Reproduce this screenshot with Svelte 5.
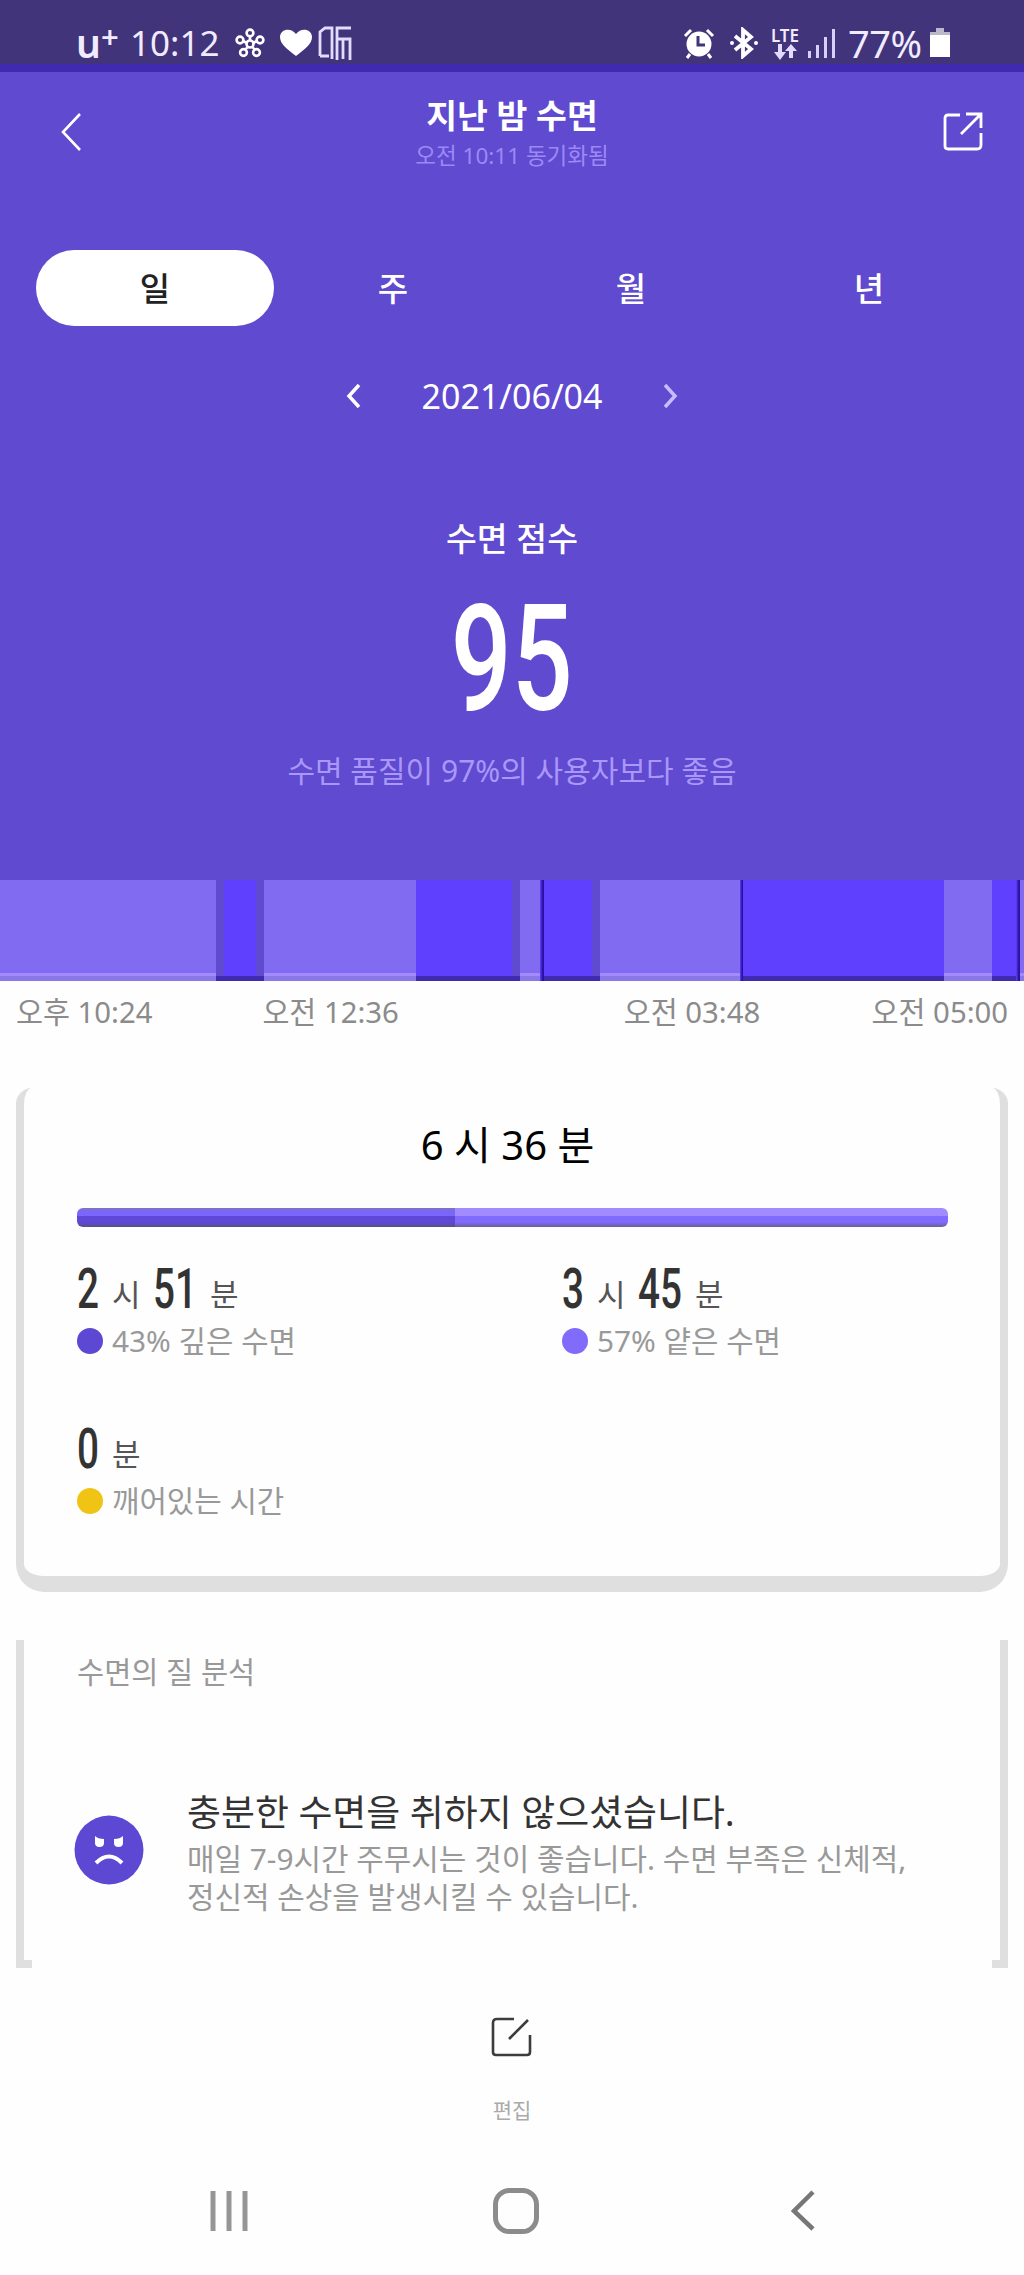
<script lang="ts">
	const tabs = ['일', '주', '월', '년'];
	let active = $state('일');

	// sleep stages across the recorded night, widths in px
	const stages = [
		{ kind: 'light', w: 216 },
		{ kind: 'gap', w: 8 },
		{ kind: 'deep', w: 32 },
		{ kind: 'gap', w: 8 },
		{ kind: 'light', w: 152 },
		{ kind: 'deep', w: 96 },
		{ kind: 'gap', w: 8 },
		{ kind: 'light', w: 20 },
		{ kind: 'line', w: 4 },
		{ kind: 'deep', w: 48 },
		{ kind: 'gap', w: 8 },
		{ kind: 'light', w: 140 },
		{ kind: 'line', w: 3 },
		{ kind: 'deep', w: 201 },
		{ kind: 'light', w: 48 },
		{ kind: 'deep', w: 24 },
		{ kind: 'line', w: 4 },
		{ kind: 'light', w: 4 }
	];

	const stats = [
		{ parts: [['2', '시'], ['51', '분']], color: '#5c48d2', label: '43% 깊은 수면' },
		{ parts: [['3', '시'], ['45', '분']], color: '#816bfa', label: '57% 얕은 수면' },
		{ parts: [['0', '분']], color: '#efc414', label: '깨어있는 시간' }
	];
</script>

<div class="screen">
	<div class="status">
		<div class="status-side">
			<span class="carrier">u<sup>+</sup></span>
			<span class="clock">10:12</span>
			<svg viewBox="0 0 32 32" width="32" height="32">
				<g fill="none" stroke="#fff" stroke-width="2.6">
					<circle cx="16" cy="17" r="3.5" />
					<circle cx="16" cy="6" r="3.4" />
					<circle cx="26" cy="13" r="3.4" />
					<circle cx="22.5" cy="25.5" r="3.4" />
					<circle cx="9.5" cy="25.5" r="3.4" />
					<circle cx="6" cy="13" r="3.4" />
					<path d="M16 9v5M23 14l-4 2M21 23l-3-3.5M11 23l3-3.5M9 14l4 2" />
				</g>
			</svg>
			<svg class="heart" viewBox="0 0 32 28" width="32" height="28">
				<path fill="#fff" d="M16 27C7 20 0 15 0 8 0 0 11-2 16 5 21-2 32 0 32 8c0 7-7 12-16 19z" />
			</svg>
			<svg class="bracket" viewBox="0 0 36 36" width="36" height="36">
				<path fill="none" stroke="#e4dcff" stroke-width="2.8" d="M2 31V7l5-4h7v31M2 31h9M19 35V3h14M19 14h13v21M25 14v20" />
			</svg>
		</div>
		<div class="status-side">
			<svg viewBox="0 0 32 32" width="32" height="32">
				<circle cx="16" cy="17" r="12.5" fill="#fff" />
				<path fill="none" stroke="#fff" stroke-width="3" d="M2 9l6-6M24 3l6 6M7 27l-3 4M25 27l3 4" />
				<path fill="none" stroke="#41347a" stroke-width="3" d="M15 9v9h7" />
			</svg>
			<svg class="bt" viewBox="0 0 30 32" width="30" height="32">
				<path fill="none" stroke="#fff" stroke-width="3.8" d="M6 9l16 13-8 7V3l8 7L6 23" />
				<circle cx="3" cy="16" r="2" fill="#fff" />
				<circle cx="27" cy="16" r="2" fill="#fff" />
			</svg>
			<div class="lte">
				<span>LTE</span>
				<svg viewBox="0 0 26 16" width="26" height="16">
					<path fill="#e4dcff" d="M6 0h4v8h4l-6 8-6-8h4zM17 14h4V7h4l-6-7-6 7h4z" />
				</svg>
			</div>
			<svg class="signal" viewBox="0 0 28 30" width="28" height="30">
				<path fill="#d9d0fa" d="M0 23h3v7H0zM8 17h3v13H8zM16 9h3v21h-3zM24 1h3v29h-3z" />
			</svg>
			<span class="percent">77%</span>
			<svg class="battery" viewBox="0 0 22 30" width="22" height="30">
				<path fill="#bdb7cc" d="M7 0h8v4h6v5H1V4h6z" />
				<path fill="#fff" d="M1 7h20v22H1z" />
			</svg>
		</div>
	</div>

	<section class="hero">
		<header>
			<svg viewBox="0 0 40 40" width="40" height="40">
				<path fill="none" stroke="#fff" stroke-width="2.6" d="M26 2L9 20l17 18" />
			</svg>
			<div class="heading">
				<h1>지난 밤 수면</h1>
				<p>오전 10:11 동기화됨</p>
			</div>
			<svg viewBox="0 0 40 40" width="40" height="40">
				<path fill="none" stroke="#fff" stroke-width="2.8" d="M17 3H5q-3 0-3 3v28q0 3 3 3h29q4 0 4-4V21M23 2h15v14M38 2L18 22" />
			</svg>
		</header>

		<div class="tabs">
			{#each tabs as tab}
				<button class:active={active === tab} onclick={() => (active = tab)}>{tab}</button>
			{/each}
		</div>

		<div class="date">
			<svg viewBox="0 0 16 26" width="16" height="26">
				<path fill="none" stroke="#fff" stroke-width="3.5" d="M13 2L3 13l10 11" />
			</svg>
			<span>2021/06/04</span>
			<svg viewBox="0 0 16 26" width="16" height="26">
				<path fill="none" stroke="#c8bcff" stroke-width="3.5" d="M3 2l10 11L3 24" />
			</svg>
		</div>

		<div class="score-label">수면 점수</div>
		<div class="score"><span>95</span></div>
		<div class="quality">수면 품질이 97%의 사용자보다 좋음</div>

		<div class="stages">
			{#each stages as s}
				<div class={s.kind} style="width: {s.w}px"></div>
			{/each}
		</div>
	</section>

	<div class="times">
		<span>오후 10:24</span>
		<span class="second">오전 12:36</span>
		<span class="third">오전 03:48</span>
		<span class="last">오전 05:00</span>
	</div>

	<section class="card summary">
		<h2>6 시 36 분</h2>
		<div class="bar">
			<div class="bar-deep"></div>
			<div class="bar-light"></div>
		</div>
		<div class="stats">
			{#each stats as stat}
				<div class="stat">
					<div class="value">
						{#each stat.parts as [num, unit]}
							<span class="num" class:wide={num.length > 1}><b>{num}</b></span>
							<span class="unit">{unit}</span>
						{/each}
					</div>
					<div class="legend">
						<i style="background: {stat.color}"></i>
						<span>{stat.label}</span>
					</div>
				</div>
			{/each}
		</div>
	</section>

	<section class="card analysis">
		<h3>수면의 질 분석</h3>
		<div class="advice">
			<svg viewBox="0 0 70 70" width="70" height="70">
				<circle cx="35" cy="35" r="34.5" fill="#5c48d2" />
				<path fill="none" stroke="#fff" stroke-width="4" d="M22 48q13-13 26 0" />
				<path fill="#fff" d="M21 21q3 3 9 3v4q0 4-4.500 4T21 28zM40 24q6 0 9-3v7q0 4-4.500 4T40 28z" />
			</svg>
			<div>
				<h4>충분한 수면을 취하지 않으셨습니다.</h4>
				<p>매일 7-9시간 주무시는 것이 좋습니다. 수면 부족은 신체적,<br />정신적 손상을 발생시킬 수 있습니다.</p>
			</div>
		</div>
	</section>

	<div class="edit">
		<svg viewBox="0 0 42 42" width="42" height="42">
			<path fill="none" stroke="#3c3c3c" stroke-width="2.6" d="M23 3H6q-4 0-4 4v29q0 3 3 3h31q3 0 3-3V19M18 23L37 4" />
		</svg>
		<span>편집</span>
	</div>

	<nav>
		<svg viewBox="0 0 44 42" width="44" height="42">
			<path fill="none" stroke="#959595" stroke-width="5" d="M5 1v40M21 1v40M37 1v40" />
		</svg>
		<svg class="home" viewBox="0 0 48 48" width="48" height="48">
			<rect x="3.5" y="3.5" width="41" height="41" rx="14" fill="none" stroke="#8c8c8c" stroke-width="5" />
		</svg>
		<svg viewBox="0 0 28 42" width="28" height="42">
			<path fill="none" stroke="#777" stroke-width="4.5" d="M24 2L5 21l19 18" />
		</svg>
	</nav>
</div>

<style>
	:global(body) {
		margin: 0;
		background: #fefefe;
	}

	.screen {
		width: 1024px;
		height: 2275px;
		overflow: hidden;
		font-family: 'Noto Sans', 'Noto Sans CJK KR', sans-serif;
		color: #222;
	}

	h1,
	h2,
	h3,
	h4,
	p {
		margin: 0;
		font-weight: 400;
	}

	svg {
		display: block;
		flex: none;
	}

	.status {
		box-sizing: border-box;
		height: 72px;
		padding: 16px 73px 0 76px;
		display: flex;
		justify-content: space-between;
		background: #41347a;
		border-bottom: 8px solid #402ab0;
		color: #f1ebff;
	}

	.status-side {
		display: flex;
		align-items: center;
		height: 54px;
		font-size: 35px;
		line-height: 54px;
	}

	.carrier {
		width: 54px;
		font-size: 39px;
		font-weight: 600;
	}

	.carrier sup {
		font-size: 31px;
		line-height: 0;
		vertical-align: 10px;
	}

	.clock {
		width: 104px;
	}

	.heart {
		margin-left: 14px;
	}

	.bracket {
		margin-left: 6px;
	}

	.bt {
		margin-left: 14px;
	}

	.lte {
		margin-left: 12px;
		display: flex;
		flex-direction: column;
		align-items: center;
		font-size: 17px;
		line-height: 17px;
		font-weight: 600;
	}

	.signal {
		margin-left: 9px;
	}

	.percent {
		margin-left: 12px;
		width: 80px;
		font-size: 38px;
		letter-spacing: -0.5px;
	}

	.battery {
		margin-left: 1px;
	}

	.hero {
		height: 909px;
		background: #5f4ad0;
		color: #fff;
		display: flex;
		flex-direction: column;
	}

	header {
		display: flex;
		justify-content: space-between;
		padding: 15px 41px 0 54px;
		height: 163px;
	}

	header > svg {
		margin-top: 25px;
	}

	.heading {
		margin-right: 13px;
		text-align: center;
	}

	h1 {
		font-size: 33.5px;
		line-height: 56px;
		font-weight: 700;
	}

	.heading p {
		font-size: 22.5px;
		line-height: 26px;
		color: #9c89f5;
	}

	.tabs {
		display: grid;
		grid-template-columns: repeat(4, 238px);
		padding: 0 36px;
		height: 76px;
	}

	.tabs button {
		border: 0;
		border-radius: 38px;
		background: none;
		color: #fff;
		font: 500 33px/76px 'Noto Sans', 'Noto Sans CJK KR', sans-serif;
		padding: 1px 0 0;
		height: 76px;
		overflow: hidden;
	}

	.tabs .active {
		background: #fff;
		color: #222;
	}

	.date {
		margin-top: 45px;
		height: 50px;
		display: flex;
		justify-content: center;
		align-items: center;
		gap: 60px;
		font-size: 34px;
	}

	.score-label {
		margin-top: 92px;
		text-align: center;
		font-size: 33.5px;
		line-height: 50px;
		font-weight: 500;
	}

	.score {
		margin-top: 43px;
		height: 107px;
		display: flex;
		justify-content: center;
		font: 500 149px/107px Roboto, sans-serif;
	}

	.score span {
		transform: scaleX(0.72);
	}

	.quality {
		margin-top: 34px;
		text-align: center;
		font-size: 30px;
		line-height: 48px;
		color: #a997fa;
	}

	.stages {
		margin-top: auto;
		height: 101px;
		display: flex;
	}

	.light {
		background: linear-gradient(#816bf1 93px, #a48aff 93px 96px, #8a77e8 96px);
	}

	.deep {
		background: linear-gradient(#5f40ff 96px, #402ab0 96px);
	}

	.gap {
		background: linear-gradient(#5f4ad0 96px, #402ab0 96px);
	}

	.line {
		background: linear-gradient(90deg, #5f40ff, #2b0fa0 70%);
	}

	.times {
		display: flex;
		padding: 4px 16px 0;
		height: 103px;
		font-size: 29.3px;
		line-height: 54px;
		color: #8b8b8b;
	}

	.second {
		margin-left: 110px;
	}

	.third {
		margin-left: 225px;
	}

	.last {
		margin-left: auto;
	}

	.card {
		box-sizing: border-box;
		margin: 0 16px;
		border: 0 solid #dfdfdf;
		border-width: 0 8px;
	}

	.summary {
		height: 504px;
		border-bottom-width: 16px;
		border-radius: 16px 16px 28px 28px;
		padding: 24px 52px 0 53px;
	}

	h2 {
		margin-left: -10px;
		text-align: center;
		font-size: 40px;
		line-height: 66px;
		color: #000;
	}

	.bar {
		margin-top: 30px;
		height: 19px;
		display: flex;
		border-radius: 6px;
		overflow: hidden;
	}

	.bar-deep {
		width: 378px;
		background: linear-gradient(#8070cc 2px, #7a66fa 3px 8px, #5f48d8 8px 14px, #5a4f88);
	}

	.bar-light {
		flex: 1;
		background: linear-gradient(#a18cff 8px, #816bff 8px 14px, #6a5f95);
	}

	.stats {
		display: grid;
		grid-template-columns: 485px 1fr;
		row-gap: 60px;
		margin-top: 32px;
	}

	.stat {
		height: 100px;
	}

	.value {
		display: flex;
		height: 62px;
		line-height: 60px;
	}

	.num {
		width: 35px;
		font-family: Roboto, sans-serif;
		font-size: 56px;
		color: #333;
	}

	.num.wide {
		width: 57px;
	}

	.num b {
		display: inline-block;
		font-weight: 500;
		transform: scaleX(0.69);
		transform-origin: left;
	}

	.unit {
		width: 41px;
		font-size: 31px;
		line-height: 70px;
		color: #555;
	}

	.legend {
		display: flex;
		align-items: center;
		height: 40px;
		font-size: 29.8px;
		line-height: 40px;
		color: #999;
	}

	.legend i {
		width: 26px;
		height: 26px;
		margin-right: 9px;
		border-radius: 50%;
	}

	.analysis {
		margin-top: 48px;
		height: 328px;
		padding: 6px 40px 0 50px;
		background:
			linear-gradient(#dfdfdf, #dfdfdf) left bottom / 8px 8px no-repeat,
			linear-gradient(#dfdfdf, #dfdfdf) right bottom / 8px 8px no-repeat;
	}

	h3 {
		padding-left: 3px;
		font-size: 29.5px;
		line-height: 52px;
		color: #999;
	}

	.advice {
		display: flex;
		margin-top: 86px;
	}

	.advice > svg {
		margin: 31px 43px 0 0;
	}

	h4 {
		font-size: 36.9px;
		line-height: 56px;
		white-space: nowrap;
		color: #333;
	}

	.advice p {
		font-size: 29.9px;
		line-height: 38px;
		white-space: nowrap;
		color: #999;
	}

	.edit {
		display: flex;
		flex-direction: column;
		align-items: center;
		padding-top: 48px;
	}

	.edit span {
		margin-top: 34px;
		font-size: 21px;
		line-height: 36px;
		color: #aaa;
	}

	nav {
		display: flex;
		justify-content: space-between;
		align-items: center;
		height: 48px;
		margin-top: 59px;
		padding: 0 207px 0 208px;
	}

	.home {
		margin-right: 10px;
	}
</style>
